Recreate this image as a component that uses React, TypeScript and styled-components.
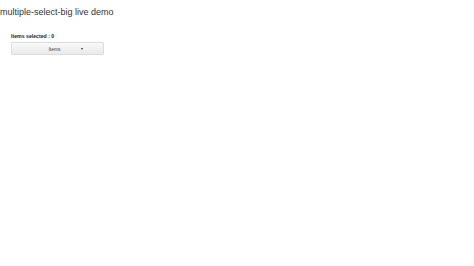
import React from "react";
import styled, { createGlobalStyle } from "styled-components";

const Global = createGlobalStyle`
  html, body { margin: 0; padding: 0; background: #fff; }
  body { font-family: "Liberation Sans", Arial, sans-serif; color: #333; }
`;

const Page = styled.div`
  display: flex;
  flex-direction: column;
`;

const Title = styled.h1`
  margin: 7px 0 0 0;
  font-size: 9px;
  font-weight: normal;
  line-height: 11px;
  color: #333;
`;

const Demo = styled.div`
  display: flex;
  flex-direction: column;
  align-items: flex-start;
  padding: 15px 0 0 11px;
  gap: 2px;
`;

const Label = styled.div`
  font-size: 5.2px;
  font-weight: bold;
  line-height: 7px;
  color: #222;
`;

const SelectButton = styled.button`
  width: 93px;
  height: 13px;
  padding: 0;
  border: 1px solid #ddd;
  border-radius: 1px;
  background: linear-gradient(#fafafa, #e9e9e9);
  display: flex;
  align-items: center;
  font-family: "Liberation Sans", Arial, sans-serif;
  font-size: 5px;
  color: #444;
  position: relative;
`;

const ButtonText = styled.span`
  flex: 1;
  text-align: center;
  padding-right: 6px;
`;

const Caret = styled.span`
  position: absolute;
  left: 69px;
  top: 5px;
  width: 0;
  height: 0;
  border-left: 1.5px solid transparent;
  border-right: 1.5px solid transparent;
  border-top: 2px solid #333;
`;

export default function App() {
  return (
    <Page>
      <Global />
      <Title>multiple-select-big live demo</Title>
      <Demo>
        <Label>Items selected : 0</Label>
        <SelectButton>
          <ButtonText>Items</ButtonText>
          <Caret />
        </SelectButton>
      </Demo>
    </Page>
  );
}
